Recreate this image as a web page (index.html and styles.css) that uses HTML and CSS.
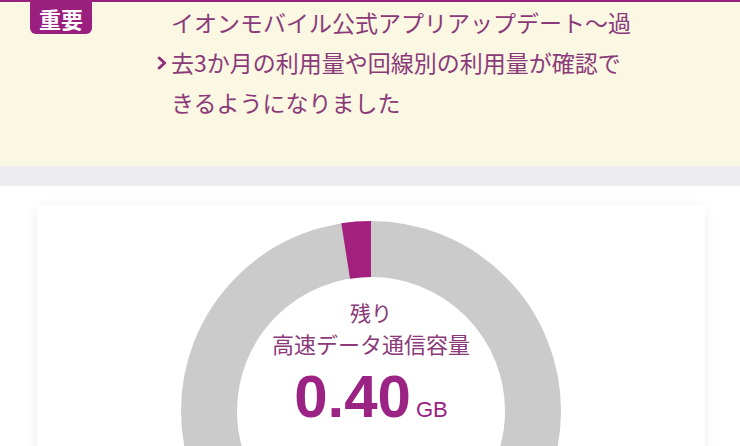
FILE: index.html
```html
<!DOCTYPE html>
<html lang="ja">
<head>
<meta charset="utf-8">
<title>イオンモバイル</title>
<link rel="stylesheet" href="styles.css">
</head>
<body>
<div class="notice">
  <span class="badge">重要</span>
  <a class="notice-link" href="#">
    <svg class="chevron" width="10" height="14" viewBox="0 0 10 14" aria-hidden="true"><polyline points="2.2,2 7.6,7 2.2,12" fill="none" stroke="#8e2f7a" stroke-width="3" stroke-linecap="round" stroke-linejoin="round"/></svg>
    <p class="notice-text">イオンモバイル公式アプリアップデート〜過去3か月の利用量や回線別の利用量が確認できるようになりました</p>
  </a>
</div>
<div class="divider"></div>
<main class="content">
  <section class="card">
    <div class="donut">
      <svg class="donut-chart" width="380" height="380" viewBox="0 0 380 380" aria-hidden="true">
        <circle cx="190" cy="190" r="162" fill="none" stroke="#cbcbcb" stroke-width="56"/>
        <path d="M190 0 A190 190 0 0 0 160.3 2.3 L169.04 57.65 A134 134 0 0 1 190 56 Z" fill="#a3207f"/>
      </svg>
      <div class="donut-label">
        <p class="label-small">残り</p>
        <p class="label-title">高速データ通信容量</p>
        <p class="amount"><span class="amount-value">0.40</span><span class="amount-unit">GB</span></p>
      </div>
    </div>
  </section>
</main>
</body>
</html>
```
FILE: styles.css
```css
* { box-sizing: border-box; }
html, body { margin: 0; padding: 0; }
body {
  background: #ffffff;
  font-family: "Noto Sans CJK JP", "Noto Sans", sans-serif;
  color: #8b3a79;
  width: 740px;
  height: 446px;
  overflow: hidden;
}
.notice {
  display: flex;
  align-items: flex-start;
  height: 166px;
  background: #faf7e3;
  border-top: 2px solid #98237d;
  padding-left: 30px;
}
.badge {
  display: flex;
  align-items: center;
  justify-content: center;
  width: 62px;
  height: 32px;
  background: #9a1f7f;
  color: #ffffff;
  font-size: 22px;
  font-weight: 700;
  border-radius: 0 0 6px 6px;
  line-height: 1;
  padding-bottom: 1px;
}
.notice-link {
  display: flex;
  align-items: center;
  gap: 4px;
  margin-left: 65px;
  text-decoration: none;
  color: inherit;
}
.chevron { display: block; flex: none; margin-top: 1px; }
.notice-text {
  margin: 0;
  width: 470px;
  font-size: 23px;
  line-height: 40px;
  color: #8b3a79;
}
.divider {
  height: 20px;
  background: #ededf0;
}
.content {
  padding: 19px 35px 0 37px;
}
.card {
  background: #ffffff;
  box-shadow: 0 2px 12px rgba(0, 0, 0, 0.07);
  padding-top: 16px;
  display: flex;
  justify-content: center;
}
.donut {
  display: grid;
  width: 380px;
  height: 380px;
  flex: none;
}
.donut-chart, .donut-label { grid-area: 1 / 1; }
.donut-chart { display: block; }
.donut-label {
  display: flex;
  flex-direction: column;
  align-items: center;
  padding-top: 76px;
}
.label-small, .label-title {
  margin: 0;
  font-size: 21px;
  line-height: 31px;
  color: #8b3a79;
}
.label-title { font-size: 22px; }
.amount {
  margin: 8px 0 0;
  display: flex;
  align-items: baseline;
  color: #9a2384;
  font-family: "Liberation Sans", Arial, sans-serif;
}
.amount-value {
  font-size: 60px;
  font-weight: 700;
  line-height: 60px;
}
.amount-unit {
  font-size: 22px;
  margin-left: 5px;
}
```
